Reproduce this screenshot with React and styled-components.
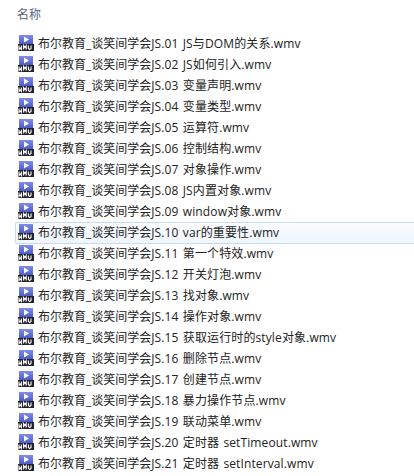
import React from "react";
import styled, { createGlobalStyle } from "styled-components";

const GlobalStyle = createGlobalStyle`
    html, body {
        margin: 0;
        padding: 0;
        background: #fff;
        overflow: hidden;
    }
`;

const Page = styled.div`
    width: 414px;
    height: 476px;
    overflow: hidden;
    font-family: "Open Sans", "Noto Sans CJK SC", sans-serif;
    font-size: 12px;
    color: #222;
`;

const Header = styled.div`
    height: 33px;
    padding: 7px 0 0 17px;
    box-sizing: border-box;
    line-height: 16px;
    color: #566479;
`;

const List = styled.div`
    display: flex;
    flex-direction: column;
`;

const Row = styled.div`
    display: flex;
    align-items: flex-start;
    gap: 4px;
    box-sizing: border-box;
    height: 21px;
    flex: none;
    padding: 2px 0 0 18px;
    white-space: nowrap;
`;

const ActiveRow = styled(Row)`
    margin-left: 15px;
    padding: 1px 0 0 2px;
    height: 22px;
    margin-bottom: -1px;
    border: 1px solid #c9dcef;
    border-right: none;
    border-radius: 2px 0 0 2px;
    background: linear-gradient(#fafcff, #eff6fe);
`;

const Name = styled.span`
    line-height: 17px;
`;

const Suffix = styled.span`
    letter-spacing: 0.12px;
    word-spacing: 1px;
`;

const WmvIcon = () => (
    <svg width="16" height="16" viewBox="0 0 16 16" style={{ flex: "none" }}>
        <defs>
            <linearGradient id="wmv-top" x1="0" y1="0" x2="0" y2="1">
                <stop offset="0" stopColor="#7f8cec" />
                <stop offset="1" stopColor="#4656cc" />
            </linearGradient>
        </defs>
        <rect x="1" y="0" width="14" height="10" fill="url(#wmv-top)" />
        <path d="M6 1.5 L11 4.5 L6 7.5 Z" fill="#fff" />
        <rect x="0" y="9" width="16" height="7" fill="#23232b" />
        <path
            d="M1 10.5v4l1.2-1.5 1.2 1.5v-4M5.6 14.5v-4l1.3 2 1.3-2v4M10.4 10.5v3l1.3 1 1.3-1v-3"
            fill="none"
            stroke="#fff"
            strokeWidth="1.1"
        />
    </svg>
);

const FILES = [
    "JS.01 JS与DOM的关系.wmv",
    "JS.02 JS如何引入.wmv",
    "JS.03 变量声明.wmv",
    "JS.04 变量类型.wmv",
    "JS.05 运算符.wmv",
    "JS.06 控制结构.wmv",
    "JS.07 对象操作.wmv",
    "JS.08 JS内置对象.wmv",
    "JS.09 window对象.wmv",
    "JS.10 var的重要性.wmv",
    "JS.11 第一个特效.wmv",
    "JS.12 开关灯泡.wmv",
    "JS.13 找对象.wmv",
    "JS.14 操作对象.wmv",
    "JS.15 获取运行时的style对象.wmv",
    "JS.16 删除节点.wmv",
    "JS.17 创建节点.wmv",
    "JS.18 暴力操作节点.wmv",
    "JS.19 联动菜单.wmv",
    "JS.20 定时器 setTimeout.wmv",
    "JS.21 定时器 setInterval.wmv",
];

const App = () => (
    <Page>
        <GlobalStyle />
        <Header>名称</Header>
        <List>
            {FILES.map((file, index) => {
                const Item = index === 9 ? ActiveRow : Row;
                return (
                    <Item key={file}>
                        <WmvIcon />
                        <Name>
                            布尔教育_谈笑间学会<Suffix>{file}</Suffix>
                        </Name>
                    </Item>
                );
            })}
        </List>
    </Page>
);

export default App;
